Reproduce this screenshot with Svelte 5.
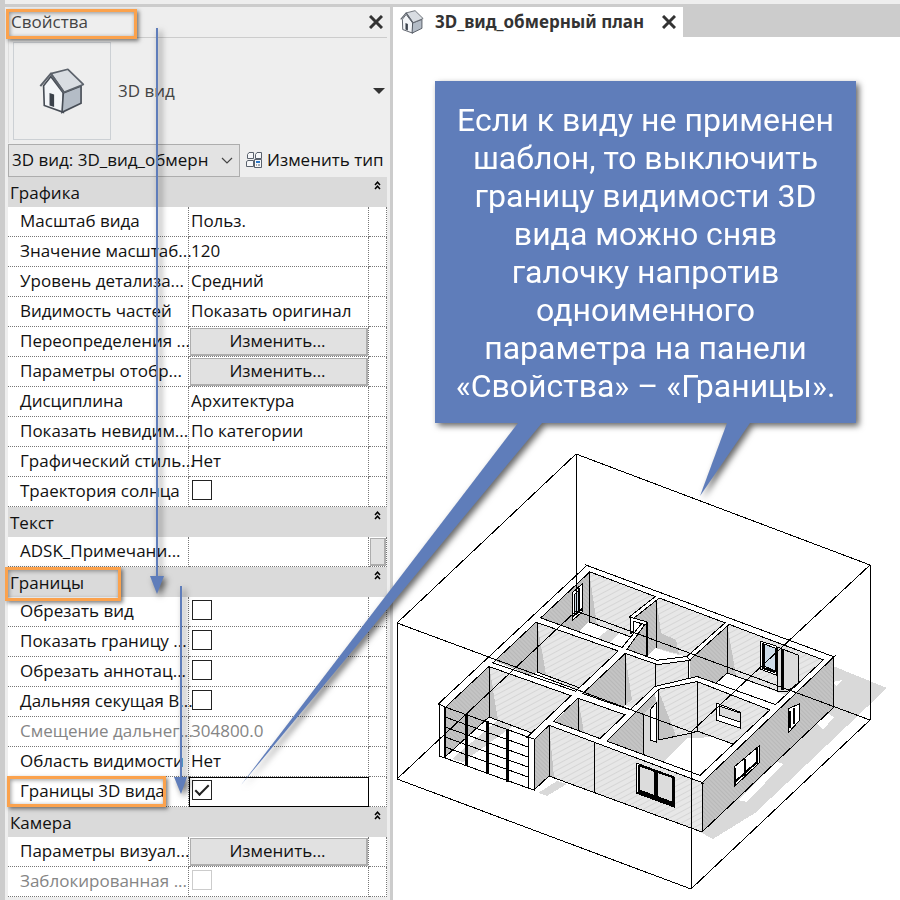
<script>
  let groups = $state([
    {
      name: 'Графика',
      rows: [
        { name: 'Масштаб вида', value: 'Польз.' },
        { name: 'Значение масштаб...', value: '120' },
        { name: 'Уровень детализа...', value: 'Средний' },
        { name: 'Видимость частей', value: 'Показать оригинал' },
        { name: 'Переопределения ...', type: 'button' },
        { name: 'Параметры отобр...', type: 'button' },
        { name: 'Дисциплина', value: 'Архитектура' },
        { name: 'Показать невидим...', value: 'По категории' },
        { name: 'Графический стиль...', value: 'Нет' },
        { name: 'Траектория солнца', type: 'check', checked: false }
      ]
    },
    {
      name: 'Текст',
      rows: [{ name: 'ADSK_Примечани...', value: '', more: true }]
    },
    {
      name: 'Границы',
      marked: true,
      rows: [
        { name: 'Обрезать вид', type: 'check', checked: false },
        { name: 'Показать границу ...', type: 'check', checked: false },
        { name: 'Обрезать аннотац...', type: 'check', checked: false },
        { name: 'Дальняя секущая В...', type: 'check', checked: false },
        { name: 'Смещение дальнег...', value: '304800.0', disabled: true },
        { name: 'Область видимости', value: 'Нет' },
        { name: 'Границы 3D вида', type: 'check', checked: true, marked: true, active: true }
      ]
    },
    {
      name: 'Камера',
      rows: [
        { name: 'Параметры визуал...', type: 'button' },
        { name: 'Заблокированная ...', type: 'check', checked: false, disabled: true }
      ]
    }
  ]);

  const note = [
    'Если к виду не применен',
    'шаблон, то выключить',
    'границу видимости 3D',
    'вида можно сняв',
    'галочку напротив',
    'одноименного',
    'параметра на панели',
    '«Свойства» – «Границы».'
  ];

  // faces of the model, painted back to front
  const faces = [
    ['shade', '833,666 887,688 787,783 755,813 713,839 700,832'],
    ['floor', '738,800 777,762 783,764 747,802'],
    ['floor', '815,722 827,713 834,717 823,730'],
    ['floor', '832,682 842,680 837,686'],
    ['shade', '538,793 557,781 567,784 547,796'],
    ['floor', '439,704 587,566 833,657 702,782 549,725 534,790 445,758 439,756'],
    ['dark', '540,618 589,571 589,622 578,632'],
    ['light', '589,571 656,597 630,617 630,637 589,622'],
    ['shadow', '589,571 597,625 589,622'],
    ['shade', '598,638 609,629 619,633 610,643'],
    ['dark', '656,597 630,617 647,622 647,656 656,648'],
    ['dark', '620,650 643,624 647,626 647,656'],
    ['light', '656,597 727,623 688,657 667,652 656,648'],
    ['shadow', '656,597 661,633 676,640 679,654 656,648'],
    ['dark', '727,623 727,673 715,684 690,678 690,657'],
    ['light', '727,623 825,659 785,695 727,673'],
    ['shadow', '727,623 736,676 727,673'],
    ['dark', '493,660 537,622 537,672 531,676'],
    ['light', '537,622 620,650 578,691 537,672'],
    ['shadow', '537,622 546,675 537,672'],
    ['dark', '625,653 625,706 619,708 580,694'],
    ['light', '625,653 657,664 688,659 688,679 655,687 632,708 625,705'],
    ['shadow', '625,653 632,700 625,705'],
    ['dark', '445,707 489,665 489,717 445,757'],
    ['light', '489,665 572,696 532,733 489,717'],
    ['shadow', '489,665 498,720 489,717'],
    ['shade', '498,720 513,726 463,762 452,759'],
    ['dark', '578,698 578,732 553,723'],
    ['light', '578,698 627,714 601,740 578,732'],
    ['shadow', '578,698 584,733 578,732'],
    ['dark', '604,741 655,690 656,703 643,714 643,755'],
    ['shade', '643,714 658,700 658,740 692,733 664,762 643,755'],
    ['light', '658,689 697,681 697,731 658,740'],
    ['shadow', '658,689 676,736 658,740'],
    ['shade', '676,737 697,731 716,737 692,738'],
    ['light', '697,681 772,708 733,744 697,731'],
    ['light', '549,725 702,782 702,832 549,776'],
    ['shadow', '549,725 554,777 549,776'],
    ['dark', '534,739 549,725 549,776 534,790'],
    ['dark', '702,782 833,657 833,708 702,832']
  ];

  // white tops of the walls, overlapping where they join
  const walls = [
    '439,704 587,566 590,571 445,707',
    '587,566 833,657 825,660 589,571',
    '833,657 702,782 700,776 825,659',
    '547,724 551,721 700,776 702,782',
    '528,737 620,650 625,653 534,739',
    '486,661 632,711 627,715 486,665',
    '534,616 655,660 662,663 657,664 534,621',
    '658,595 630,617 632,619 661,596',
    '619,652 642,624 646,622 623,654',
    '728,621 687,657 690,659 731,622',
    '655,661 687,657 689,660 658,664',
    '597,742 655,687 697,677 778,706 774,711 697,681 658,689 603,744'
  ];

  // wall corners and floor edges
  const edges =
    'M589 571V622 M656 597V648 M727 623V673 M537 621V672 M489 665V717 M625 653V705 ' +
    'M578 698V732 M549 725V776 M594 742V792 M643 714V755 M658 689V740 M697 681V731 ' +
    'M655 664V686 M688 659V678 M833 657V708 M702 782V832 M534 739V790 M528 737V788 ' +
    'M439 704V756 M439 756L445 758 M528 788L534 790L549 776L702 832L833 708 ' +
    'M589 622L631 637 M537 672L580 688 M531 676L627 711 M489 717L532 733 ' +
    'M658 740L692 733L697 731L733 744 M727 673L778 691 M715 684L727 673 M489 717L445 757';

  // section box of the view
  const sectionBox =
    'M576 454L870 565V720L691 889L397 779V623Z M397 623L691 732L870 565 M691 732V889 ' +
    'M576 454V611L397 779 M576 611L870 720';

  const mullions = [
    [466, 714, 766],
    [487, 721, 773],
    [507, 729, 782]
  ];
</script>

{#snippet house()}
  <svg class="house" viewBox="0 0 140 140" aria-hidden="true">
    <path d="M14 54 36 26 74 76V135L16 114Z" fill="#f3f5f8" stroke="#474d56" stroke-width="5" />
    <path d="M74 76 128 55V107L70 135Z" fill="#b4bcc6" stroke="#474d56" stroke-width="5" />
    <path d="M32 76 46 81V119L32 114Z" fill="#3b424c" />
    <path d="M36 17 88 4 135 50 76 74Z" fill="#d9dde2" stroke="#5c626b" stroke-width="5" stroke-linejoin="round" />
    <path d="M4 55 36 17 76 74" fill="none" stroke="#5c626b" stroke-width="6" stroke-linejoin="round" />
  </svg>
{/snippet}

{#snippet cross()}
  <svg viewBox="0 0 14 14" aria-hidden="true">
    <path d="M1 1 13 13M13 1 1 13" stroke="#333" stroke-width="3" />
  </svg>
{/snippet}

<div class="app">
  <div class="ribbon"></div>

  <div class="workspace">
    <aside class="panel">
      <header class="panel-head">
        <h1 class="title">Свойства<span class="mark mark-title"></span></h1>
        <button class="close" aria-label="Закрыть панель">{@render cross()}</button>
      </header>

      <div class="type">
        <div class="thumb">{@render house()}</div>
        <span class="type-name">3D вид</span>
        <button class="type-arrow" aria-label="Выбрать тип">
          <svg viewBox="0 0 12 6" aria-hidden="true"><path d="M0 0H12L6 6Z" fill="#333" /></svg>
        </button>
      </div>

      <div class="instance">
        <div class="select">
          <select aria-label="Экземпляр">
            <option>3D вид: 3D_вид_обмерн</option>
          </select>
          <svg viewBox="0 0 12 8" aria-hidden="true">
            <path d="M1 1 6 6 11 1" fill="none" stroke="#444" stroke-width="1.2" />
          </svg>
        </div>
        <button class="edit-type">
          <svg viewBox="0 0 16 16" aria-hidden="true">
            <g fill="#f6f7f9" stroke="#59616c">
              <path d="M1.5 2.5 3 .5H7.5V6.5H1.5ZM9.5 2.5 11 .5H15.5V6.5H9.5ZM.5 9.5 2 8.5H7.5V14.5H.5Z" />
              <path d="M8.500 7.500H15.500V15.500H8.500Z" />
            </g>
            <path d="M10 9H14V11H10Z" fill="#2b78c8" />
            <path d="M10 13H11M12 13H14" stroke="#59616c" />
          </svg>
          Изменить тип
        </button>
      </div>

      <table class="props">
        <colgroup>
          <col class="col-name" />
          <col />
          <col class="col-more" />
        </colgroup>
        {#each groups as group, g}
          <tbody>
            <tr class="group">
              <th colspan="3" scope="rowgroup">
                <div class="group-head">
                  {group.name}
                  {#if group.marked}<span class="mark mark-group"></span>{/if}
                  <button class="fold" aria-label="Свернуть">
                    <svg viewBox="0 0 7 9" aria-hidden="true">
                      <path d="M1 4 3.5 1.2 6 4M1 8 3.5 5.2 6 8" fill="none" stroke="#000" stroke-width="1.5" />
                    </svg>
                  </button>
                </div>
              </th>
            </tr>
            {#each group.rows as row, r}
              <tr class:disabled={row.disabled}>
                <td class="name">
                  <label for="p{g}-{r}">{row.name}</label>
                  {#if row.marked}<span class="mark mark-row"></span>{/if}
                </td>
                <td class="value" class:active={row.active}>
                  {#if row.type === 'button'}
                    <button class="edit" id="p{g}-{r}">Изменить...</button>
                  {:else if row.type === 'check'}
                    <input type="checkbox" id="p{g}-{r}" bind:checked={row.checked} disabled={row.disabled} />
                  {:else}
                    <input type="text" id="p{g}-{r}" bind:value={row.value} disabled={row.disabled} />
                  {/if}
                </td>
                <td class="more">
                  {#if row.more}<button class="more-btn" aria-label="Связать параметр"></button>{/if}
                </td>
              </tr>
            {/each}
          </tbody>
        {/each}
      </table>
    </aside>

    <main class="view">
      <nav class="tabs">
        <div class="tab">
          {@render house()}
          <span>3D_вид_обмерный план</span>
          <button class="close" aria-label="Закрыть вид">{@render cross()}</button>
        </div>
      </nav>

      <svg class="model" viewBox="393 37 507 863" role="img" aria-label="3D вид здания">
        <defs>
          <pattern id="hatch-light" width="9" height="5" patternUnits="userSpaceOnUse" patternTransform="rotate(-28)">
            <rect width="9" height="5" fill="#e7e7e7" />
            <path d="M0 1H9" stroke="#d6d6d6" />
          </pattern>
          <pattern id="hatch-dark" width="3" height="3" patternUnits="userSpaceOnUse" patternTransform="rotate(45)">
            <rect width="3" height="3" fill="#c4c4c4" />
            <path d="M0 1H3" stroke="#b8b8b8" />
          </pattern>
        </defs>

        {#each faces as [kind, points]}
          <polygon class={kind} {points} />
        {/each}

        <path class="line" d={edges} />

        <!-- outlines first, then the fills, so that the joints stay open -->
        {#each walls as points}
          <polygon class="outline" {points} />
        {/each}
        {#each walls as points}
          <polygon class="floor" {points} />
        {/each}

        <!-- garage glazing -->
        <path class="line top" d="M439 704 445 707V758L439 756Z M528 737 534 739V790L528 788Z" />
        <g class="line">
          {#each [0, 10, 20, 30, 40, 51] as dy}
            <path d="M445 {707 + dy}L528 {737 + dy}" />
          {/each}
          <path d="M445 707V758" stroke-width="2" />
          {#each mullions as [x, top, bottom]}
            <path d="M{x} {top}V{bottom}" stroke-width="3" />
          {/each}
        </g>

        <!-- windows and doors -->
        <g class="line">
          <path class="top" d="M572 593 582 584V612L572 621Z" />
          <path class="glass" d="M574 595 578 591V611L574 615Z" />
          <path d="M579 588V611M572 617 582 609" stroke-width="2" />
          <path class="top" d="M630 617 647 622V656H646V625L633 621V632L630 634Z" />
          <path d="M647 622V656" stroke-width="2" />
          <path class="top" d="M760 641 776 646V675L760 669Z" />
          <path class="glass" d="M764 644 775 648V671L764 666Z" />
          <path d="M763 643V668L775 672" stroke-width="2" />
          <path class="pane" d="M777 647 798 655V683L788 691 778 691Z" />
          <path d="M782 649V690" stroke-width="3" />
          <path class="top" d="M650 710 656 703V742L650 740Z" />
          <path class="top" d="M716 703 740 712V728L716 720Z" />
          <path class="pane" d="M719 706 740 713V722L719 715Z" />
          <path class="top" d="M636 763 674 777V807L636 793Z" />
          <path class="pane" d="M639 766 674 778V803L639 790Z" />
          <path d="M639 765V792M673 777V806M639 765 673 777" stroke-width="2" />
          <path d="M656 771V799M638 791 673 804" stroke-width="4" />
          <path class="top" d="M734 767 759 746V763L734 787Z" />
          <path d="M735 768V786M745 759V776M757 748V764M735 782 757 762" stroke-width="2" />
          <path class="top" d="M788 709 799 704V721L788 733Z" />
          <path d="M790 711V728M794 708V724" stroke-width="2" />
        </g>

        <path class="line" d={sectionBox} />
      </svg>
    </main>
  </div>

  <div class="guides" aria-hidden="true">
    <svg viewBox="0 0 900 900">
      <path d="M156 28H158V576H164L157 594 150 576H156Z" />
      <path d="M180 586H182V777H187L181 794 174 777H180Z" />
    </svg>
  </div>
  <div class="guides">
    <svg viewBox="0 0 900 900" aria-hidden="true">
      <path d="M518 423H542L241 785Z" />
      <path d="M727 423H750L700 496Z" />
    </svg>
    <p class="note">
      {#each note as line}
        <span>{line}</span>
      {/each}
    </p>
  </div>
</div>

<style>
  :global(body) {
    margin: 0;
    background: #fff;
  }

  .app {
    position: relative;
    display: flex;
    flex-direction: column;
    height: 100vh;
    overflow: hidden;
    box-sizing: border-box;
    border-left: 5px solid #ccc;
    font-family: 'Open Sans', 'Noto Sans', sans-serif;
    font-size: 17px;
    line-height: 24px;
    color: #111;
  }

  button,
  select,
  input {
    font: inherit;
    color: inherit;
    margin: 0;
    padding: 0;
  }

  button {
    border: 0;
    background: none;
  }

  svg {
    display: block;
  }

  .ribbon {
    flex: none;
    height: 4px;
    background: #eee;
    border-bottom: 3px solid #ccc;
  }

  .workspace {
    flex: 1;
    display: flex;
    min-height: 0;
  }

  /* properties panel */
  .panel {
    flex: none;
    width: 379px;
    padding: 0 3px;
    background: #eee;
    border-right: 3px solid #ccc;
    overflow: hidden;
  }

  .panel-head {
    display: flex;
    align-items: center;
    justify-content: space-between;
    height: 30px;
    padding: 0 4px 0 3px;
    border-bottom: 1px solid #ccc;
  }

  .title {
    position: relative;
    margin: 0;
    font-size: 17px;
    font-weight: 400;
    color: #444;
  }

  .close {
    width: 14px;
    height: 14px;
  }

  .type {
    display: flex;
    align-items: center;
    height: 105px;
    padding: 0 2px 0 4px;
    border-left: 1px solid #ddd;
    box-sizing: border-box;
    color: #444;
  }

  .thumb {
    display: flex;
    align-items: center;
    justify-content: center;
    width: 96px;
    height: 96px;
    border: 1px solid #ccd0d4;
  }

  .thumb .house {
    width: 46px;
    height: 46px;
  }

  .type-name {
    flex: 1;
    padding-left: 7px;
  }

  .type-arrow {
    width: 12px;
  }

  .instance {
    display: flex;
    align-items: center;
    gap: 6px;
    height: 34px;
  }

  .select {
    position: relative;
    width: 232px;
  }

  .select select {
    display: block;
    width: 100%;
    height: 33px;
    padding: 0 24px 0 3px;
    appearance: none;
    border: 1px solid #adadad;
    border-radius: 0;
    background: #e3e3e3;
  }

  .select svg {
    position: absolute;
    right: 7px;
    top: 13px;
    width: 12px;
    pointer-events: none;
  }

  .edit-type {
    display: flex;
    align-items: center;
    gap: 5px;
    white-space: nowrap;
  }

  .edit-type svg {
    width: 16px;
    height: 16px;
  }

  .props {
    width: 379px;
    table-layout: fixed;
    border-collapse: separate;
    border-spacing: 0;
    background: #fff;
  }

  .col-name {
    width: 181px;
  }

  .col-more {
    width: 18px;
  }

  .props th,
  .props td {
    height: 30px;
    padding: 0;
    box-sizing: border-box;
    font-weight: 400;
    text-align: left;
    white-space: nowrap;
  }

  .group-head {
    position: relative;
    display: flex;
    align-items: flex-end;
    justify-content: space-between;
    height: 30px;
    padding: 0 6px 2px 2px;
    box-sizing: border-box;
    background: #dadada;
  }

  .fold {
    width: 7px;
    align-self: flex-start;
    padding-top: 4px;
  }

  .props td {
    position: relative;
    border-right: 1px dotted #777;
    border-bottom: 1px dotted #777;
  }

  .name label {
    display: block;
    padding: 0 0 2px 12px;
  }

  .disabled {
    color: #858585;
  }

  .value input[type='text'] {
    display: block;
    width: 100%;
    height: 26px;
    padding: 0 0 2px 2px;
    box-sizing: border-box;
    border: 0;
    background: none;
  }

  .value input[type='checkbox'] {
    display: block;
    width: 20px;
    height: 20px;
    margin-left: 3px;
    margin-bottom: 3px;
    appearance: none;
    border: 1px solid #222;
    background: #fff;
  }

  .value input[type='checkbox']:disabled {
    border-color: #ccc;
  }

  .value input[type='checkbox']:checked::after {
    content: '';
    display: block;
    width: 12px;
    height: 5px;
    margin: 4px 0 0 2px;
    border-left: 2px solid #222;
    border-bottom: 2px solid #222;
    transform: rotate(-45deg);
  }

  .value.active {
    outline: 1px solid #000;
    outline-offset: -1px;
  }

  .edit {
    display: block;
    width: 178px;
    height: 28px;
    margin-left: 1px;
    padding-right: 2px;
    border: 1px solid #adadad;
    border-right-width: 2px;
    border-bottom-width: 2px;
    background: #e1e1e1;
  }

  .more-btn {
    display: block;
    width: 16px;
    height: 28px;
    margin-left: 1px;
    border: 1px solid #adadad;
    border-right-width: 2px;
    border-bottom-width: 2px;
    background: #e1e1e1;
  }

  .mark {
    position: absolute;
    z-index: 2;
    box-sizing: border-box;
    border: 3px solid #fba24d;
    box-shadow: 2px 2px 4px rgba(0, 0, 0, 0.5), inset 1px 1px 4px rgba(0, 0, 0, 0.4);
    pointer-events: none;
  }

  .mark-title {
    left: -5px;
    top: -1px;
    width: 131px;
    height: 30px;
  }

  .mark-group {
    left: -3px;
    top: 0;
    width: 116px;
    height: 34px;
  }

  .mark-row {
    left: -1px;
    top: -1px;
    width: 159px;
    height: 31px;
  }

  /* drawing area */
  .view {
    flex: 1;
    min-width: 0;
    background: #fff;
  }

  .tabs {
    display: flex;
    height: 30px;
    background: #ccc;
  }

  .tab {
    display: flex;
    align-items: center;
    padding: 0 7px;
    background: #fff;
    color: #333;
    font-family: 'Noto Sans', 'Open Sans', sans-serif;
    font-weight: 700;
    white-space: nowrap;
  }

  .tab .house {
    width: 24px;
    height: 24px;
    margin-right: 11px;
  }

  .tab .close {
    margin-left: 18px;
  }

  .model {
    width: 507px;
    height: 863px;
    shape-rendering: crispEdges;
  }

  .line {
    fill: none;
    stroke: #000;
  }

  .outline {
    fill: none;
    stroke: #000;
    stroke-width: 2px;
  }

  .light {
    fill: url(#hatch-light);
  }

  .dark {
    fill: url(#hatch-dark);
  }

  .shade {
    fill: #d9d9d9;
  }

  .shadow {
    fill: #c4c4c4;
  }

  .floor,
  .top {
    fill: #fff;
  }

  .glass {
    fill: #cddbe8;
  }

  .pane {
    fill: #dcdcdc;
  }

  /* annotations */
  .guides {
    position: absolute;
    left: -5px;
    top: 0;
    z-index: 3;
    filter: drop-shadow(3px 3px 3px rgba(0, 0, 0, 0.6));
    pointer-events: none;
  }

  .guides svg {
    width: 900px;
    height: 900px;
    fill: #5f7dba;
  }

  .note {
    position: absolute;
    left: 435px;
    top: 81px;
    width: 421px;
    margin: 0;
    padding: 20px 0 18px;
    box-sizing: border-box;
    background: #5f7dba;
    color: #fff;
    font-family: Roboto, sans-serif;
    font-size: 32px;
    line-height: 38px;
    text-align: center;
    white-space: nowrap;
  }

  .note span {
    display: block;
  }
</style>
